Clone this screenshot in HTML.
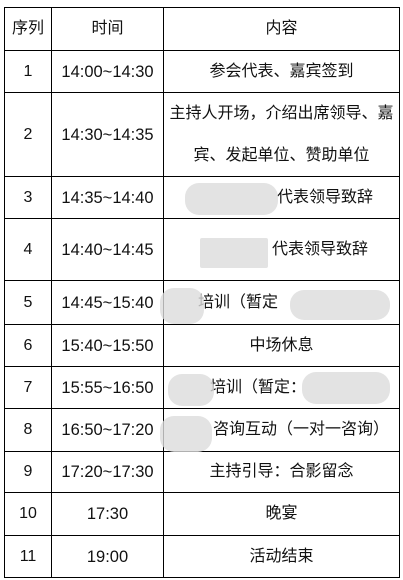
<!DOCTYPE html><html><head><meta charset="utf-8"><style>
body{margin:0;width:403px;height:580px;background:#fff;position:relative;overflow:hidden;font-family:"Liberation Sans","Noto Sans CJK SC",sans-serif;font-size:16px;color:#111}
.h{position:absolute;left:4px;width:396px;height:1px;background:#000}
.v{position:absolute;top:7px;height:571px;width:1px;background:#000}
.c{position:absolute;display:flex;align-items:center;justify-content:center;text-align:center;line-height:30px;white-space:nowrap}
.t{font-size:16.5px}
.l{justify-content:flex-start}
.b{position:absolute;background:#dcdcdc;border-radius:14px;opacity:.8}
</style></head><body>
<div class="h" style="top:7px"></div><div class="h" style="top:50px"></div><div class="h" style="top:92px"></div><div class="h" style="top:176px"></div><div class="h" style="top:218px"></div><div class="h" style="top:280px"></div><div class="h" style="top:324px"></div><div class="h" style="top:366px"></div><div class="h" style="top:408px"></div><div class="h" style="top:451px"></div><div class="h" style="top:492px"></div><div class="h" style="top:535px"></div><div class="h" style="top:577px"></div>
<div class="v" style="left:4px"></div><div class="v" style="left:51px"></div><div class="v" style="left:163px"></div><div class="v" style="left:399px"></div>
<div id="rows"></div>
<script>
var ys=[7,50,92,176,218,280,324,366,408,451,492,535,577];
var d=[["序列","时间","内容"],["1","14:00~14:30","参会代表、嘉宾签到"],["2","14:30~14:35","主持人开场，介绍出席领导、嘉<br>宾、发起单位、赞助单位"],["3","14:35~14:40","代表领导致辞",277],["4","14:40~14:45","代表领导致辞",272],["5","14:45~15:40","培训（暂定",198],["6","15:40~15:50","中场休息"],["7","15:55~16:50","培训（暂定：",210],["8","16:50~17:20","咨询互动（一对一咨询）",213],["9","17:20~17:30","主持引导：合影留念"],["10","17:30","晚宴"],["11","19:00","活动结束"]];
var xs=[4,51,163,399],h="";
for(var i=0;i<d.length;i++)for(var j=0;j<3;j++){var st="",cl="c";if(i==2&&j==2)st="line-height:42px;";if(j==1&&i>0)cl+=" t";var left=xs[j]+1,w=xs[j+1]-xs[j]-1;if(j==2&&d[i][3]){cl+=" l";left=d[i][3];w=399-left;}h+='<div class="'+cl+'" style="'+st+'left:'+left+'px;width:'+w+'px;top:'+(ys[i]+1)+'px;height:'+(ys[i+1]-ys[i]-1)+'px;">'+d[i][j]+'</div>';}
document.getElementById("rows").innerHTML=h;
</script>
<div class="b" style="left:185px;top:183px;width:93px;height:32px"></div>
<div class="b" style="left:200px;top:238px;width:68px;height:30px;border-radius:2px"></div>
<div class="b" style="left:160px;top:288px;width:44px;height:36px"></div>
<div class="b" style="left:290px;top:290px;width:100px;height:30px"></div>
<div class="b" style="left:168px;top:374px;width:46px;height:32px"></div>
<div class="b" style="left:302px;top:372px;width:88px;height:32px"></div>
<div class="b" style="left:160px;top:416px;width:52px;height:36px"></div>
</body></html>
